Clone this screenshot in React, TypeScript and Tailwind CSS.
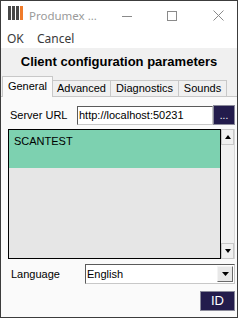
import React from "react";

function Tri({ up = false, w = 7, h = 4 }: { up?: boolean; w?: number; h?: number }) {
  return (
    <svg width={w} height={h} viewBox={`0 0 ${w} ${h}`}>
      {up ? (
        <polygon points={`0,${h} ${w},${h} ${w / 2},0`} fill="#000" />
      ) : (
        <polygon points={`0,0 ${w},0 ${w / 2},${h}`} fill="#000" />
      )}
    </svg>
  );
}

export default function App() {
  const form = { fontFamily: '"Liberation Sans", Arial, sans-serif' };
  const ui = { fontFamily: '"Noto Sans", "Open Sans", sans-serif' };
  return (
    <div className="w-[238px] h-[318px] border border-[#3c3c3c] bg-[#f0f0f0] flex flex-col overflow-hidden" style={form}>
      {/* title bar */}
      <div className="h-[29px] bg-white flex items-center shrink-0" style={ui}>
        <div className="ml-[7px] flex gap-[1px] h-[14px] self-start mt-[5px]">
          <div className="w-[3px] h-full bg-[#474747]" />
          <div className="w-[3px] h-full bg-[#474747]" />
          <div className="w-[3px] h-full bg-[#474747]" />
          <div className="w-[3px] h-full bg-[#f07b2a]" />
        </div>
        <span className="ml-[6px] text-[11.5px] text-[#9a9a9a] flex-1 leading-none">Produmex ...</span>
        <svg width="10" height="10" viewBox="0 0 10 10" className="mr-[35px]">
          <line x1="0" y1="5.5" x2="10" y2="5.5" stroke="#8a8a8a" strokeWidth="1" />
        </svg>
        <svg width="10" height="10" viewBox="0 0 10 10" className="mr-[36px]">
          <rect x="0.5" y="0.5" width="9" height="9" fill="none" stroke="#8a8a8a" strokeWidth="1" />
        </svg>
        <svg width="11" height="11" viewBox="0 0 11 11" className="mr-[13px]">
          <line x1="0.5" y1="0.5" x2="10.5" y2="10.5" stroke="#8a8a8a" strokeWidth="1" />
          <line x1="10.5" y1="0.5" x2="0.5" y2="10.5" stroke="#8a8a8a" strokeWidth="1" />
        </svg>
      </div>
      {/* menu bar */}
      <div className="h-[18px] bg-white flex items-center pl-[6px] text-[12px] text-[#3a3a3a] shrink-0" style={ui}>
        <span className="w-[30px] leading-none">OK</span>
        <span className="leading-none">Cancel</span>
      </div>
      {/* header */}
      <div className="h-[28px] flex items-center justify-center text-[13px] font-bold text-black shrink-0">
        Client configuration parameters
      </div>
      {/* tabs */}
      <div className="h-[21px] flex items-end pl-[1px] text-[11px] text-black shrink-0 relative z-10">
        <div className="w-[51px] h-[21px] bg-[#fafafa] border-l border-t border-r border-[#c8c8c8] flex items-center justify-center pb-[2px]">
          General
        </div>
        <div className="w-[58px] h-[16px] bg-[#f0f0f0] border-t border-r border-[#c8c8c8] mb-px flex items-center justify-center">
          Advanced
        </div>
        <div className="w-[68px] h-[16px] bg-[#f0f0f0] border-t border-r border-[#c8c8c8] mb-px flex items-center justify-center">
          Diagnostics
        </div>
        <div className="w-[48px] h-[16px] bg-[#f0f0f0] border-t border-r border-[#c8c8c8] mb-px flex items-center justify-center">
          Sounds
        </div>
      </div>
      {/* panel */}
      <div className="flex-1 bg-[#fafafa] border-t border-[#c8c8c8] -mt-px flex flex-col pl-[7px] pr-[2px] pt-[8px] text-[11px] text-black">
        <div className="h-[20px] flex items-center">
          <span className="w-[69px] pl-[2px]">Server URL</span>
          <div className="flex-1 h-[19px] bg-white border border-t-[#5a5a5a] border-l-[#5a5a5a] border-r-[#c8c8c8] border-b-[#c8c8c8] flex items-center pl-[1px]">
            http://localhost:50231
          </div>
          <div className="w-[22px] h-[20px] bg-[#231c4c] border border-[#8a8a9a] flex items-end justify-center pb-[3px] text-white text-[10px] leading-none">
            ...
          </div>
        </div>
        <div className="mt-[4px] h-[130px] flex">
          <div className="flex-1 border border-black bg-[#e6e6e6] flex flex-col">
            <div className="h-[38px] bg-[#7dd1b0] pl-[5px] pt-[3px] text-[11px]">SCANTEST</div>
          </div>
          <div className="w-[14px] bg-[#f0f0f0] border-r border-[#d8d8d8] flex flex-col justify-between">
            <div className="h-[16px] border border-[#c8c8c8] bg-[#f0f0f0] flex items-center justify-center">
              <Tri up w={6} h={4} />
            </div>
            <div className="h-[16px] border border-[#c8c8c8] bg-[#f0f0f0] flex items-center justify-center">
              <Tri w={6} h={4} />
            </div>
          </div>
        </div>
        <div className="mt-[5px] h-[20px] flex items-center">
          <span className="w-[77px] pl-[3px]">Language</span>
          <div className="flex-1 h-[20px] bg-white border border-t-[#5a5a5a] border-l-[#5a5a5a] border-r-[#c8c8c8] border-b-[#c8c8c8] flex items-center pl-[1px] pr-[1px]">
            <span className="flex-1">English</span>
            <div className="w-[16px] h-[16px] bg-[#e8e8e8] border border-t-[#f4f4f4] border-l-[#f4f4f4] border-r-[#6a6a6a] border-b-[#6a6a6a] flex items-center justify-center">
              <Tri w={7} h={4} />
            </div>
          </div>
        </div>
        <div className="mt-[7px] flex justify-end">
          <div className="w-[35px] h-[20px] bg-[#231c4c] border border-[#8a8a9a] flex items-center justify-center text-white text-[13px]">
            ID
          </div>
        </div>
      </div>
    </div>
  );
}
